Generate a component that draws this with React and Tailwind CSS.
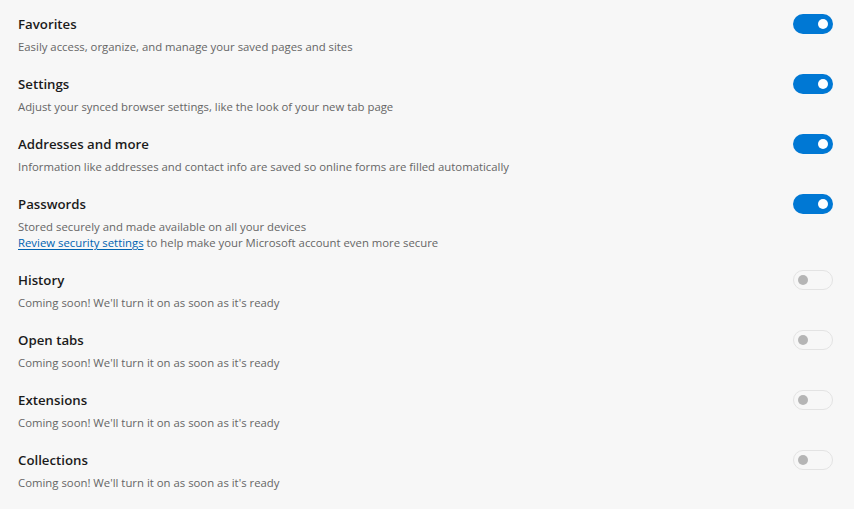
const items = [
  { title: "Favorites", desc: "Easily access, organize, and manage your saved pages and sites", on: true },
  { title: "Settings", desc: "Adjust your synced browser settings, like the look of your new tab page", on: true },
  { title: "Addresses and more", desc: "Information like addresses and contact info are saved so online forms are filled automatically", on: true },
  { title: "Passwords", desc: "Stored securely and made available on all your devices", on: true, link: true },
  { title: "History", desc: "Coming soon! We'll turn it on as soon as it's ready", on: false },
  { title: "Open tabs", desc: "Coming soon! We'll turn it on as soon as it's ready", on: false },
  { title: "Extensions", desc: "Coming soon! We'll turn it on as soon as it's ready", on: false },
  { title: "Collections", desc: "Coming soon! We'll turn it on as soon as it's ready", on: false },
];

const Toggle = ({ on }) =>
  on ? (
    <div className="w-10 h-5 rounded-full bg-[#0078d4] flex items-center justify-end pr-[5px] shrink-0">
      <div className="w-[10px] h-[10px] rounded-full bg-white" />
    </div>
  ) : (
    <div className="w-10 h-5 rounded-full border border-[#e3e3e3] flex items-center pl-[4px] shrink-0">
      <div className="w-[10px] h-[10px] rounded-full bg-[#b5b5b5]" />
    </div>
  );

export default function App() {
  return (
    <div
      className="min-h-screen w-[854px] h-[509px] bg-[#f7f7f7] pl-[18px] pr-[21px]"
      style={{ fontFamily: '"Open Sans", "Noto Sans", sans-serif' }}
    >
      {items.map((item) => (
        <div key={item.title} className="flex justify-between pt-[14px] pb-[5px]">
          <div>
            <p className="text-[13.25px] leading-5 font-[560] text-[#1b1b1b]">{item.title}</p>
            <p className="text-[11.35px] leading-4 mt-[5px] text-[#666666]">{item.desc}</p>
            {item.link && (
              <p className="text-[11.35px] leading-4 text-[#666666]">
                <span className="text-[#0063b1] underline underline-offset-2">Review security settings</span> to help
                make your Microsoft account even more secure
              </p>
            )}
          </div>
          <Toggle on={item.on} />
        </div>
      ))}
    </div>
  );
}
